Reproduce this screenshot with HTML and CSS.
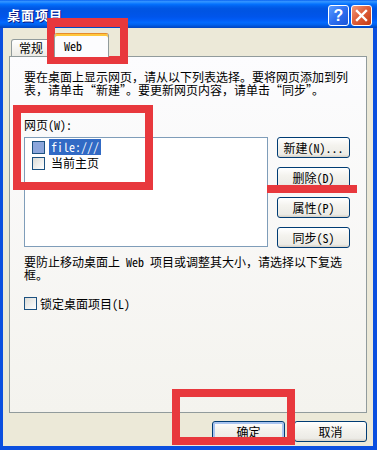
FILE: index.html
```html
<!DOCTYPE html>
<html lang="zh-CN">
<head>
<meta charset="utf-8">
<title>桌面项目</title>
<link rel="stylesheet" href="styles.css">
</head>
<body>
<div class="window">
  <div class="titlebar">
    <span class="title">桌面项目</span>
    <div class="caption-btns">
      <span class="cbtn help">?</span>
      <span class="cbtn close"><svg width="21" height="21" viewBox="0 0 21 21"><path d="M6 6 L15 15 M15 6 L6 15" stroke="#fff" stroke-width="2.4" stroke-linecap="square" fill="none"/></svg></span>
    </div>
  </div>
  <div class="client">
    <div class="tabs">
      <div class="tab">常规</div>
      <div class="tab active">Web</div>
    </div>
    <div class="panel">
      <p class="desc">要在桌面上显示网页，请从以下列表选择。要将网页添加到列<br>表，请单击“新建”。要更新网页内容，请单击“同步”。</p>
      <div class="label">网页(W):</div>
      <div class="list-row">
        <div class="listbox">
          <div class="item"><span class="chk sel"></span><span class="itxt hl">file:///</span></div>
          <div class="item"><span class="chk"></span><span class="itxt">当前主页</span></div>
        </div>
        <div class="side-btns">
          <button class="btn">新建(N)...</button>
          <button class="btn">删除(D)</button>
          <button class="btn">属性(P)</button>
          <button class="btn">同步(S)</button>
        </div>
      </div>
      <p class="desc2">要防止移动桌面上 Web 项目或调整其大小，请选择以下复选<br>框。</p>
      <div class="lock"><span class="chk"></span><span>锁定桌面项目(L)</span></div>
    </div>
    <div class="footer">
      <button class="btn default">确定</button>
      <button class="btn">取消</button>
    </div>
  </div>
  <div class="mark m1"></div>
  <div class="mark m2"></div>
  <div class="mark bar"></div>
  <div class="mark m3"></div>
</div>
</body>
</html>
```

FILE: styles.css
```css
* { box-sizing: border-box; }
body {
  margin: 0;
  width: 377px;
  height: 450px;
  overflow: hidden;
  font-family: "Noto Sans Mono CJK SC", "Noto Sans CJK SC", sans-serif;
  font-size: 12px;
  line-height: 13px;
  color: #000;
}
.window {
  position: relative;
  width: 377px;
  height: 450px;
  background: #0b4fdf;
  display: flex;
  flex-direction: column;
}
.titlebar {
  height: 28px;
  flex: none;
  display: flex;
  align-items: center;
  padding: 0 5px 0 7px;
  background: linear-gradient(to bottom, #0058ee 0%, #3593ff 4%, #288eff 8%, #127dff 12%, #036ffc 16%, #0262ee 22%, #0057e5 30%, #0054e3 40%, #0055eb 60%, #005bf5 70%, #026afe 80%, #0062ef 88%, #0052d6 94%, #0046c0 100%);
}
.title {
  flex: 1;
  color: #fff;
  font-weight: bold;
  font-size: 13px;
  letter-spacing: 1px;
  text-shadow: 1px 1px #0a1883;
}
.caption-btns {
  display: flex;
  gap: 2px;
  align-self: flex-start;
  margin-top: 5px;
}
.cbtn {
  width: 21px;
  height: 21px;
  border: 1px solid #fff;
  border-radius: 3px;
  display: flex;
  align-items: center;
  justify-content: center;
}
.help {
  background: linear-gradient(135deg, #5a9cff 0%, #2e6ff0 50%, #1a55d8 100%);
  color: #fff;
  font-family: "Liberation Sans", sans-serif;
  font-weight: bold;
  font-size: 16px;
  line-height: 16px;
}
.close {
  background: linear-gradient(135deg, #f09a7c 0%, #e0603c 45%, #c43a12 100%);
}
.close svg { display: block; margin: -1px; }
.client {
  flex: 1;
  margin: 0 4px 4px 3px;
  background: #ece9d8;
  display: flex;
  flex-direction: column;
  padding: 5px 6px 0 6px;
}
.tabs {
  display: flex;
  align-items: flex-end;
  height: 23px;
  padding-left: 2px;
}
.tab {
  height: 17px;
  width: 45px;
  padding-left: 7px;
  border: 1px solid #919b9c;
  border-bottom: none;
  border-radius: 3px 3px 0 0;
  background: linear-gradient(#ffffff, #ecebe5);
  line-height: 16px;
}
.tab.active {
  position: relative;
  z-index: 1;
  height: 24px;
  width: 55px;
  margin-left: -2px;
  margin-bottom: -1px;
  padding-left: 9px;
  padding-top: 3px;
  border-top: 1px solid #e68b2c;
  box-shadow: inset 0 2px #ffc73c;
  background: #fcfcfe;
  line-height: 17px;
}
.panel {
  height: 357px;
  border: 1px solid #919b9c;
  background: linear-gradient(#fcfcfe, #f4f3ee);
  padding: 13px 14px 0 14px;
}
.desc, .desc2 { margin: 0; }
.label { margin-top: 22px; }
.list-row {
  margin-top: 6px;
  display: flex;
  gap: 9px;
}
.listbox {
  width: 244px;
  height: 110px;
  background: #fff;
  border: 1px solid #7f9db9;
  padding: 1px 0 0 7px;
}
.item {
  height: 16px;
  display: flex;
  align-items: center;
}
.chk {
  width: 13px;
  height: 13px;
  flex: none;
  border: 1px solid #1c5180;
  background: linear-gradient(135deg, #dcdcd7, #ffffff);
}
.chk.sel { background: #8ca6db; }
.itxt {
  margin-left: 4px;
  padding: 0 2px;
  height: 16px;
  line-height: 16px;
}
.itxt.hl { background: #316ac5; color: #fff; }
.side-btns {
  display: flex;
  flex-direction: column;
  gap: 9px;
}
.btn {
  width: 73px;
  height: 21px;
  padding: 0;
  font: inherit;
  color: #000;
  border: 1px solid #003c74;
  border-radius: 3px;
  background: linear-gradient(#ffffff 0%, #f4f3ee 40%, #ecebe6 86%, #d6d0c5 100%);
  line-height: 18px;
}
.btn.default {
  box-shadow: inset 0 0 0 2px #a9c4f0;
}
.desc2 { margin-top: 7px; }
.lock {
  margin-top: 16px;
  display: flex;
  align-items: center;
  gap: 3px;
  height: 13px;
}
.footer {
  margin-top: 8px;
  display: flex;
  justify-content: flex-end;
  gap: 9px;
}
.mark {
  position: absolute;
  border: 8px solid #e8383d;
}
.m1 { left: 47px; top: 18px; width: 81px; height: 46px; border-top-width: 9px; }
.m2 { left: 13px; top: 105px; width: 140px; height: 85px; }
.bar { left: 267px; top: 185px; width: 90px; height: 8px; border: none; background: #e8383d; }
.m3 { left: 172px; top: 389px; width: 123px; height: 56px; }
```
